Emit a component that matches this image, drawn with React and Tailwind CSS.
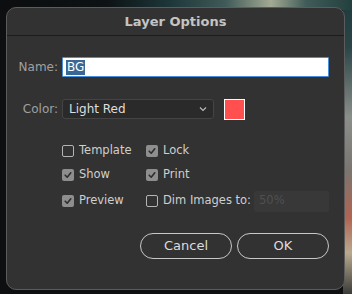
import React from "react";

function Check({ checked }) {
  if (!checked) {
    return <span className="w-[12px] h-[12px] rounded-[2px] border border-[#b4b4b4] shrink-0" />;
  }
  return (
    <span className="w-[12px] h-[12px] rounded-[2px] bg-[#8e8e8e] shrink-0 flex items-center justify-center">
      <svg width="10" height="10" viewBox="0 0 10 10">
        <path d="M2.2 5.2 L4.2 7.2 L7.8 2.8" fill="none" stroke="#2e2e2e" strokeWidth="1.6" strokeLinecap="round" strokeLinejoin="round" />
      </svg>
    </span>
  );
}

function Option({ label, checked, width }) {
  return (
    <div className={`flex items-center gap-[5px] ${width}`}>
      <Check checked={checked} />
      <span className="text-[#cfcfcf]">{label}</span>
    </div>
  );
}

export default function App() {
  return (
    <div
      className="w-[352px] h-[294px] overflow-hidden pt-[7px] pl-[6px] text-[12px] [font-family:'DejaVu_Sans',sans-serif] [background:linear-gradient(to_right,#0c0e0f_0%,#0d1214_30%,#1d3638_48%,#3f5a58_64%,#a3aa94_77%,#405b58_87%,#23403f_100%)_top/100%_10px_no-repeat,linear-gradient(to_bottom,#1f3a3d_0%,#2b4547_16%,#8a8f8a_40%,#7b7570_58%,#b06452_74%,#b9a98f_86%,#3a3b38_100%)_right/9px_100%_no-repeat,#0d0f10]"
    >
      <div className="w-[339px] h-[283px] rounded-[10px] border border-[#5c5c5c] bg-[#323232] flex flex-col">
        {/* titlebar */}
        <div className="h-[28px] border-b border-[#1c1c1c] flex items-center justify-center font-bold text-[13px] text-[#c4c4c4]">
          Layer Options
        </div>

        <div className="flex flex-col">
          {/* Name */}
          <div className="flex items-center mt-[21px] h-[20px]">
            <span className="w-[51px] text-right text-[#a0a0a0]">Name:</span>
            <div className="ml-[4px] w-[267px] h-[20px] bg-white border border-[#4a8fdc] rounded-[1px] flex items-center pl-[3px]">
              <span className="bg-[#3b6797] text-white px-[1px] leading-[15px]">BG</span>
            </div>
          </div>

          {/* Color */}
          <div className="flex items-center mt-[22px] h-[20px]">
            <span className="w-[51px] text-right text-[#a0a0a0]">Color:</span>
            <div className="ml-[4px] w-[152px] h-[20px] bg-[#2a2a2a] border border-[#444] rounded-[3px] flex items-center justify-between pl-[6px] pr-[6px] text-[#dedede]">
              <span>Light Red</span>
              <svg width="8" height="6" viewBox="0 0 8 6">
                <path d="M1 1.5 L4 4.5 L7 1.5" fill="none" stroke="#bdbdbd" strokeWidth="1.1" />
              </svg>
            </div>
            <div className="ml-[10px] w-[21px] h-[21px] bg-[#ff4f4f] border border-white" />
          </div>

          {/* options */}
          <div className="ml-[55px] w-[267px] mt-[20px] flex flex-col text-[11.5px]">
            <div className="flex items-center h-[24px]">
              <Option label="Template" checked={false} width="w-[84px]" />
              <Option label="Lock" checked={true} />
            </div>
            <div className="flex items-center h-[24px]">
              <Option label="Show" checked={true} width="w-[84px]" />
              <Option label="Print" checked={true} />
            </div>
            <div className="flex items-center h-[24px] mt-[2px]">
              <Option label="Preview" checked={true} width="w-[84px]" />
              <Option label="Dim Images to:" checked={false} />
              <div className="ml-auto w-[75px] h-[21px] bg-[#383838] rounded-[2px] flex items-center pl-[5px] text-[#505050]">
                50%
              </div>
            </div>
          </div>

          {/* buttons */}
          <div className="flex justify-end gap-[5px] mt-[20px] pr-[15px]">
            <button className="w-[92px] h-[26px] rounded-full border-[1.5px] border-[#c8c8c8] text-[#dcdcdc] text-[13px]">
              Cancel
            </button>
            <button className="w-[92px] h-[26px] rounded-full border-[1.5px] border-[#c8c8c8] text-[#dcdcdc] text-[13px]">
              OK
            </button>
          </div>
        </div>
      </div>
    </div>
  );
}
